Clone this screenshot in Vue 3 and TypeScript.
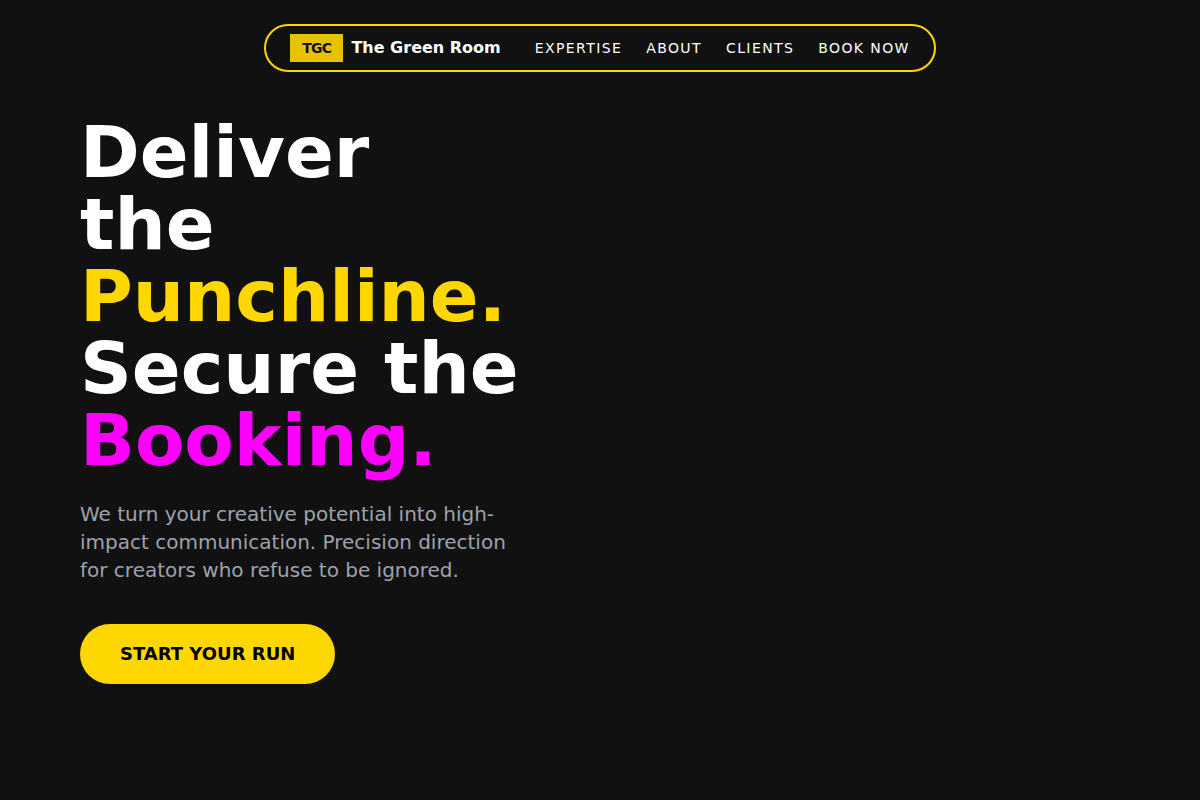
<script setup lang="ts">
interface NavLink {
  label: string
  href: string
}

const links: NavLink[] = [
  { label: 'Expertise', href: '#expertise' },
  { label: 'About', href: '#about' },
  { label: 'Clients', href: '#clients' },
  { label: 'Book Now', href: '#book' },
]
</script>

<template>
  <div class="page">
    <header class="header">
      <nav class="nav" aria-label="Main">
        <a class="brand" href="#">
          <span class="badge">TGC</span>
          <span>The Green Room</span>
        </a>
        <div class="links">
          <a v-for="link in links" :key="link.href" class="link" :href="link.href">{{ link.label }}</a>
        </div>
      </nav>
    </header>
    <main class="hero">
      <div class="copy">
        <h1 class="title">
          Deliver<br />the<br />
          <span class="yellow">Punchline.</span><br />
          Secure the<br />
          <span class="magenta">Booking.</span>
        </h1>
        <p class="lead">
          We turn your creative potential into high-impact communication. Precision direction for
          creators who refuse to be ignored.
        </p>
        <button class="cta" type="button">START YOUR RUN</button>
      </div>
    </main>
  </div>
</template>

<style>
body {
  margin: 0;
  background: #111111;
}
</style>

<style scoped>
.page {
  min-height: 100vh;
  box-sizing: border-box;
  padding-top: 24px;
  background: #111111;
  color: #ffffff;
  font-family: "DejaVu Sans", sans-serif;
}
.header {
  display: flex;
  justify-content: center;
}
.nav {
  display: flex;
  align-items: center;
  gap: 34px;
  padding: 8px 24px;
  border: 2px solid #ffd700;
  border-radius: 999px;
}
.brand {
  display: flex;
  align-items: center;
  gap: 8px;
  color: #ffffff;
  font-size: 16px;
  font-weight: 700;
  line-height: 24px;
  text-decoration: none;
}
.badge {
  padding: 0 12px;
  background: #e6c200;
  color: #111111;
  font-size: 14px;
  line-height: 28px;
  letter-spacing: -0.05em;
}
.links {
  display: flex;
  gap: 24px;
}
.link {
  color: #ffffff;
  font-size: 14px;
  line-height: 20px;
  letter-spacing: 0.1em;
  text-transform: uppercase;
  text-decoration: none;
}
.hero {
  padding: 44px 80px;
}
.copy {
  max-width: 448px;
}
.title {
  margin: 0;
  font-size: 72px;
  font-weight: 700;
  line-height: 72px;
}
.yellow {
  color: #ffd700;
}
.magenta {
  color: #ff00ff;
}
.lead {
  margin: 24px 0 40px;
  color: #9ca3af;
  font-size: 20px;
  line-height: 28px;
}
.cta {
  padding: 16px 40px;
  border: 0;
  border-radius: 999px;
  background: #ffd700;
  color: #000000;
  font-family: inherit;
  font-size: 18px;
  font-weight: 700;
  line-height: 28px;
  cursor: pointer;
}
</style>
